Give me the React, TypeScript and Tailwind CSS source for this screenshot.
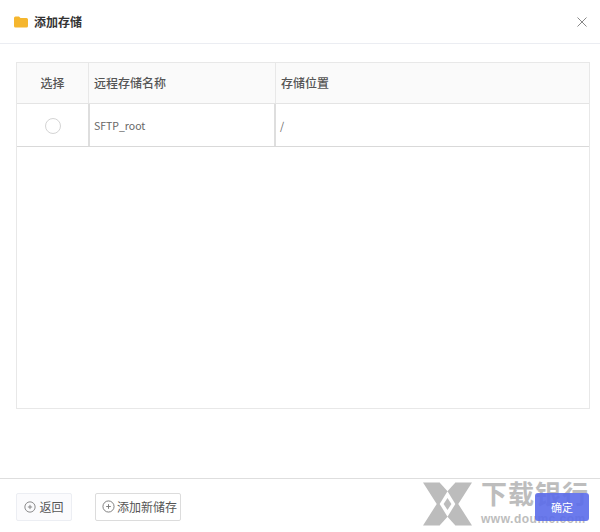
const cjk = { fontFamily: '"Noto Sans CJK SC", "Noto Sans", sans-serif' };

function PlusCircle({ size }: { size: number }) {
  return (
    <svg width={size} height={size} viewBox="0 0 14 14" fill="none" stroke="#777" strokeWidth="1">
      <circle cx="7" cy="7" r="6" />
      <path d="M4.5 7h5M7 4.5v5" />
    </svg>
  );
}

function Watermark() {
  return (
    <div className="pointer-events-none absolute left-[423px] top-[480px] flex w-[177px] gap-[9px]">
      <svg width="49" height="44" viewBox="0 0 50 44" className="mt-[2px] shrink-0">
        <path d="M0 0H17L25 7L33 0H50L36 22L50 44H33L25 37L17 44H0L14 22Z" fill="#bcbcbc" />
        <path d="M25 9L33 22L25 35L17 22Z" fill="#fff" />
        <path d="M25 16L29 22L25 28L21 22Z" fill="#bcbcbc" />
        <path d="M17 0L25 9L33 0L25 4Z" fill="#fff" />
        <path d="M17 44L25 35L33 44L25 40Z" fill="#fff" />
      </svg>
      <div className="flex flex-col text-[#bdbdbd]">
        <span className="h-[30px] whitespace-nowrap text-[26px] font-bold leading-[26px] tracking-[1px]">下载银行</span>
        <span className="mt-[2px] whitespace-nowrap text-[12px] font-bold leading-[14px] tracking-[0.5px]" style={{ fontFamily: '"Liberation Sans", sans-serif' }}>www.doumc.com</span>
      </div>
    </div>
  );
}

export default function App() {
  return (
    <div className="relative flex h-[532px] w-[600px] flex-col overflow-hidden bg-white" style={cjk}>
      <header className="flex h-11 shrink-0 items-center justify-between border-b border-[#ebedf2] pl-[14px] pr-3">
        <div className="flex items-center gap-[6px]">
          <svg width="14" height="12" viewBox="0 0 14 12">
            <path d="M0 2a1.500 1.500 0 0 1 1.500-1.500h3.500l1.500 1.500h6a1.500 1.500 0 0 1 1.500 1.500v6.500a1.500 1.500 0 0 1-1.500 1.500h-11a1.500 1.500 0 0 1-1.500-1.500z" fill="#f5b62e" />
          </svg>
          <span className="text-[12px] font-bold text-[#333]">添加存储</span>
        </div>
        <svg width="12" height="12" viewBox="0 0 12 12" stroke="#888" strokeWidth="1">
          <path d="M1.500 1.500l9 9M10.500 1.500l-9 9" />
        </svg>
      </header>
      <main className="flex-1 pl-4 pr-[10px] pt-[18px]">
        <div className="h-[347px] border border-[#e8e8e8]">
          <div className="flex h-[41px] border-b border-[#e4e4e4] bg-[#fafafa] text-[12px] font-medium text-[#555]">
            <div className="flex w-[72px] items-center justify-center border-r border-[#e8e8e8]">选择</div>
            <div className="flex w-[187px] items-center border-r border-[#e8e8e8] pl-[5px]">远程存储名称</div>
            <div className="flex flex-1 items-center pl-[5px]">存储位置</div>
          </div>
          <div className="flex h-[43px] border-b border-[#d9d9d9] text-[10.5px] text-[#666]">
            <div className="flex w-[71px] items-center justify-center pt-[2px]">
              <span className="h-4 w-4 rounded-full border border-[#d4d4d4]" />
            </div>
            <div className="flex w-[188px] items-center border-x-2 border-[#dedede] pl-[4px] pt-[2px]">SFTP_root</div>
            <div className="flex flex-1 items-center pl-[4px] pt-[2px]">/</div>
          </div>
        </div>
      </main>
      <Watermark />
      <footer className="flex h-[54px] shrink-0 items-start justify-between border-t border-[#dedede] pl-4 pr-[11px] pt-[14px] text-[12px] text-[#555]">
        <div className="flex items-start gap-[23px]">
          <button className="flex h-[28px] w-[56px] items-center justify-center gap-[3px] rounded-[2px] border border-[#eceef3] bg-[#fbfbfd]">
            <PlusCircle size={12} />
            返回
          </button>
          <button className="flex h-[28px] w-[86px] items-center justify-end gap-[2px] rounded-[2px] border border-[#dcdcdc] bg-white pr-[3px]">
            <span className="mb-[2px]"><PlusCircle size={13} /></span>
            添加新储存
          </button>
        </div>
        <button className="z-10 h-[28px] w-[54px] rounded-[3px] bg-[#5b6bea]/90 text-[11px] text-white">确定</button>
      </footer>
    </div>
  );
}
